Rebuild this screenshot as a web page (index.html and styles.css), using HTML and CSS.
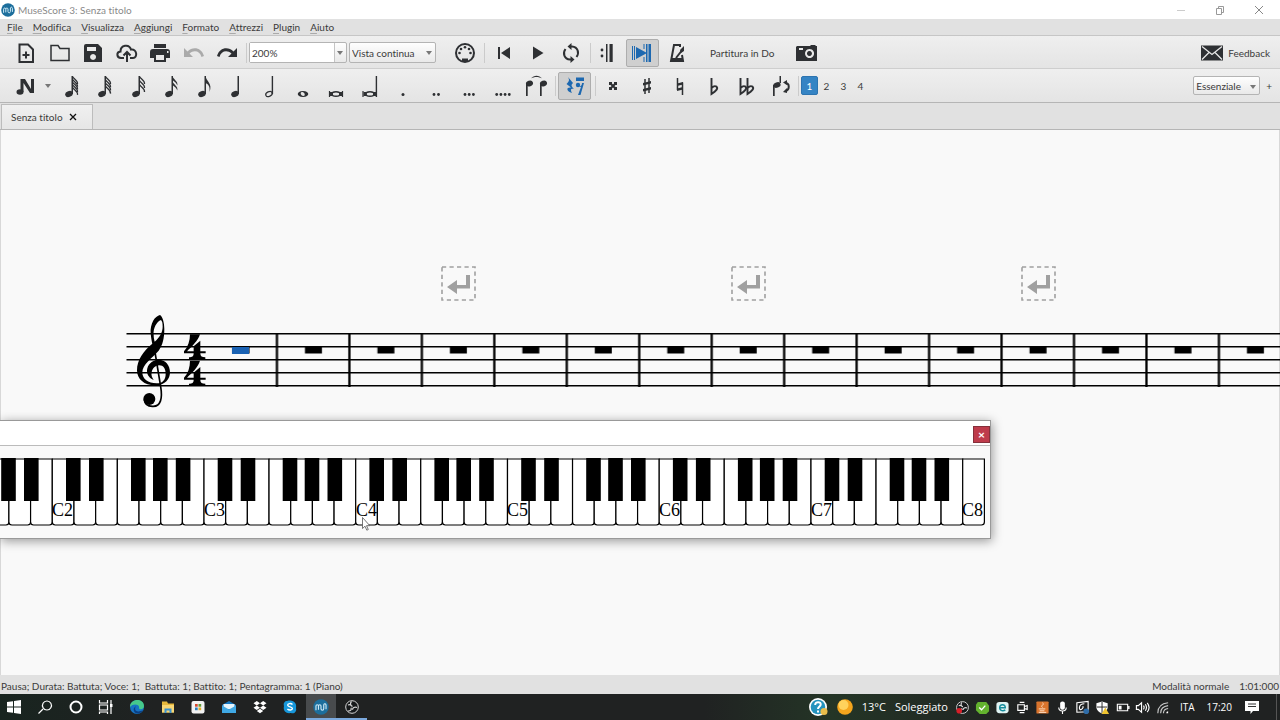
FILE: index.html
```html
<!DOCTYPE html>
<html lang="it">
<head>
<meta charset="utf-8">
<title>MuseScore 3: Senza titolo</title>
<link rel="stylesheet" href="styles.css">
</head>
<body>
<svg class="defs" aria-hidden="true">
  <defs>
    <symbol id="mu" viewBox="0 0 14 14"><circle cx="7" cy="7" r="6.8" fill="#1c6e9c"/><path d="M2.6 9.8V6.2c0-1.6 2.2-1.6 2.2 0v3.2M4.8 6.2c0-1.6 2.2-1.6 2.2 0v2.4c0 1.6 2.4 1.6 2.4 0V5M9.4 5c.6-1.4 1.8-1 2 .3v3.6" fill="none" stroke="#cfeaf6" stroke-width="1"/></symbol>
    <symbol id="flat" viewBox="0 0 24 24"><path d="M9.500 4v16C14 17 16.500 14.500 14.500 12.600 13 11.600 11 12.500 9.500 14" fill="none" stroke="#2e3033" stroke-width="1.900"/></symbol>
    <symbol id="note" viewBox="0 0 24 24"><ellipse cx="11" cy="20" rx="3.900" ry="3" transform="rotate(-18 11 20)"/><path d="M13.500 2h1.500v18h-1.500z"/></symbol>
    <symbol id="flag" viewBox="0 0 24 24"><path d="M14.500 2c.5 3.500 6 5 4.800 9.500-.8-2.800-3-3.700-4.800-5.500z"/></symbol>
    <symbol id="hairflag" viewBox="0 0 24 24"><path d="M14.500 2.500c1 2.500 5.500 3.500 5 7.500" fill="none" stroke="#2e3033" stroke-width="1.300"/></symbol>
    <symbol id="obs" viewBox="0 0 16 16"><circle cx="8" cy="8" r="6.300" fill="#16191a" stroke="#d7d7d7"/><path d="M7.500 2.500c-2 2-.7 4.300 1 4.800M13 8.500c-2.600-1-4.400.3-4.500 2.200M4 12c2.600.2 3.800-1.500 3-3.300M4 6c1.500-.5 3 0 3.500 1" fill="none" stroke="#d7d7d7" stroke-width="1.200"/></symbol>
  </defs>
</svg>

<header class="titlebar">
  <svg class="app-logo" viewBox="0 0 14 14"><use href="#mu"/></svg>
  <span class="title">MuseScore 3: Senza titolo</span>
  <div class="window-controls">
    <button aria-label="Riduci"><svg viewBox="0 0 12 12"><path d="M2 6.500h8" stroke="#ccc"/></svg></button>
    <button aria-label="Ripristina"><svg viewBox="0 0 12 12"><path d="M2.500 4.500h5v6h-5zM4.500 4.500v-2h5v6h-2" stroke="#999"/></svg></button>
    <button aria-label="Chiudi"><svg viewBox="0 0 12 12"><path d="M2 2l8 8M10 2l-8 8" stroke="#888"/></svg></button>
  </div>
</header>

<nav class="menubar">
  <button><u>F</u>ile</button><button><u>M</u>odifica</button><button><u>V</u>isualizza</button><button><u>A</u>ggiungi</button><button><u>F</u>ormato</button><button><u>A</u>ttrezzi</button><button><u>P</u>lugin</button><button><u>A</u>iuto</button>
</nav>

<div class="toolbar main-bar">
  <i class="grip"></i>
  <div class="group file-tools">
    <button aria-label="Nuovo"><svg viewBox="0 0 24 24"><path d="M5.500 3.500h8.500l5 5v12.500H5.500zM8.500 14h7M12 10.500v7" class="line2"/></svg></button>
    <button aria-label="Apri"><svg viewBox="0 0 24 24"><path d="M3 19.500v-15h7l2 3h9v12z" class="line"/></svg></button>
    <button aria-label="Salva"><svg viewBox="0 0 24 24"><path fill-rule="evenodd" d="M5 3h12l4 4v14H3V5q0-2 2-2zm1 3v4h9V6zm6 7a3 3 0 1 0 .1 0z"/></svg></button>
    <button aria-label="Salva online"><svg viewBox="0 0 24 24"><path d="M9 17H6C1.500 17 1 11 5.500 10.500 5.500 4 14 2.500 16 8.500 22 7.500 23 17 18 17h-3M12 21v-9M8.500 14.500L12 11l3.500 3.500" class="line2"/></svg></button>
    <button aria-label="Stampa"><svg viewBox="0 0 24 24"><path fill-rule="evenodd" d="M6 3h12v4H6zM5 8h14q3 0 3 3v6h-4v4H6v-4H2v-6q0-3 3-3zm3 6v5h8v-5zm11-4v2h1.500v-2z"/></svg></button>
    <button class="dim" aria-label="Annulla"><svg viewBox="0 0 24 24"><path d="M2 7v9h9l-3.500-3.500C12 8.500 18 10 19.500 16l2.500-1C19.500 6.500 11 5 5.500 10.500z"/></svg></button>
    <button aria-label="Ripeti"><svg viewBox="0 0 24 24"><path d="M22 7v9h-9l3.500-3.500C12 8.500 6 10 4.500 16L2 15C4.500 6.500 13 5 18.500 10.500z"/></svg></button>
  </div>
  <i class="sep"></i>
  <div class="combo zoom"><input aria-label="Zoom" value="200%"><button aria-label="Apri elenco zoom"></button></div>
  <div class="combo view"><select aria-label="Vista"><option>Vista continua</option></select></div>
  <button class="tool midi" aria-label="MIDI"><svg viewBox="0 0 24 24"><circle cx="12" cy="12" r="9" class="line2"/><g><circle cx="6.500" cy="12" r="1.300"/><circle cx="8" cy="8" r="1.300"/><circle cx="12" cy="6.300" r="1.300"/><circle cx="16" cy="8" r="1.300"/><circle cx="17.500" cy="12" r="1.300"/><path d="M9 17.500h6v3H9z"/></g></svg></button>
  <i class="sep"></i>
  <div class="group play-tools">
    <button aria-label="Inizio"><svg viewBox="0 0 24 24"><path d="M6 6h2v12H6zM18 6v12l-9-6z"/></svg></button>
    <button aria-label="Riproduci"><svg viewBox="0 0 24 24"><path d="M7 5.500v13L17.500 12z"/></svg></button>
    <button aria-label="Ciclo"><svg viewBox="0 0 24 24"><path d="M11 5.500h2C19 6 20.500 12 17.500 16M13 18.500h-2C5 18 3.500 12 6.500 8" class="line2"/><path d="M12.500 2v7L8.500 5.500zM11.500 15v7l4-3.500z"/></svg></button>
  </div>
  <i class="sep"></i>
  <div class="group mode-tools">
    <button aria-label="Ritornelli"><svg viewBox="0 0 24 24"><circle cx="7" cy="9" r="1.400"/><circle cx="7" cy="15" r="1.400"/><path d="M11 3h1.500v18H11zM14.500 3h3.200v18h-3.200z"/></svg></button>
    <button class="active" aria-label="Segui la riproduzione"><svg viewBox="0 0 24 24"><path d="M2 5h1v14H2zM4 5h1v14H4zM6 6l11 6-11 6zM13.500 3h1v5h-1zM13.500 16h1v5h-1zM16 3h1.500v18H16zM18.500 3h2.500v18h-2.500z"/></svg></button>
    <button aria-label="Metronomo"><svg viewBox="0 0 24 24"><path d="M11 17l7-9M15 6V4H9L6 20h12l-1-6M7 18h11" class="line2"/><path d="M15 9l4-4v5l-3 2z"/></svg></button>
  </div>
  <i class="grip"></i>
  <button class="text-tool">Partitura in Do</button>
  <i class="grip"></i>
  <button class="tool camera" aria-label="Cattura immagine"><svg viewBox="0 0 24 24"><path fill-rule="evenodd" d="M2 5h13l1-1h4l1 1h1v15H1V6zm12.500 3a4.500 4.500 0 1 0 .1 0zm0 2a2.500 2.500 0 1 1-.1 0zM4 7v2h4V7z"/></svg></button>
  <button class="feedback"><svg viewBox="0 0 24 24"><path d="M1 4.500h22v15H1z"/><path d="M2 5.500l10 8 10-8M2 18.500l7-7M22 18.500l-7-7" fill="none" stroke="#e8e8e8" stroke-width="1.300"/></svg>Feedback</button>
</div>

<div class="toolbar notes-bar">
  <i class="grip"></i>
  <button class="tool entry" aria-label="Inserimento note"><svg viewBox="0 0 24 24"><ellipse cx="6" cy="18" rx="3.500" ry="2.700"/><path d="M6.500 5H11l6 10V5h3v14h-4L9.500 9v9h-3z"/></svg></button>
  <button class="drop" aria-label="Modalità di inserimento"></button>
  <div class="group durations">
    <button aria-label="1/128"><svg viewBox="0 0 24 24"><use href="#note"/><use href="#hairflag"/><use href="#hairflag" y="2.700"/><use href="#hairflag" y="5.400"/><use href="#hairflag" y="8.100"/><use href="#hairflag" y="10.800"/></svg></button>
    <button aria-label="1/64"><svg viewBox="0 0 24 24"><use href="#note"/><use href="#hairflag"/><use href="#hairflag" y="3.200"/><use href="#hairflag" y="6.400"/><use href="#hairflag" y="9.600"/></svg></button>
    <button aria-label="1/32"><svg viewBox="0 0 24 24"><use href="#note"/><use href="#hairflag"/><use href="#hairflag" y="4"/><use href="#hairflag" y="8"/></svg></button>
    <button aria-label="1/16"><svg viewBox="0 0 24 24"><use href="#note"/><use href="#flag"/><use href="#flag" y="5"/></svg></button>
    <button aria-label="1/8"><svg viewBox="0 0 24 24"><use href="#note"/><path d="M14.500 2c.5 5 7.500 7.500 4 16 .8-6-1.500-8-4-9z"/></svg></button>
    <button aria-label="1/4"><svg viewBox="0 0 24 24"><use href="#note"/></svg></button>
    <button aria-label="1/2"><svg viewBox="0 0 24 24"><ellipse cx="11" cy="20" rx="3.400" ry="2.300" transform="rotate(-25 11 20)" class="thin"/><path d="M13.700 2h1.400v18h-1.400z"/></svg></button>
    <button aria-label="Intero"><svg viewBox="0 0 24 24"><path fill-rule="evenodd" d="M12 17c7 0 7 6 0 6s-7-6 0-6zm-1 1c-2.500.5-1 4 1.500 4s1-4.500-1.500-4z"/></svg></button>
    <button aria-label="Breve"><svg viewBox="0 0 24 24"><path d="M5.500 17v6M18.500 17v6" class="thin"/><path d="M6 18h3v4H6zM15 18h3v4h-3z"/><ellipse cx="12" cy="20" rx="4" ry="2.300" class="line"/></svg></button>
    <button aria-label="Longa"><svg viewBox="0 0 24 24"><path d="M5 17v6" class="thin"/><path d="M5.500 18h3v4h-3zM15 18h3v4h-3zM17.700 2h1.400v21h-1.400z"/><ellipse cx="12" cy="20" rx="4" ry="2.300" class="line"/></svg></button>
    <button aria-label="Punto"><svg viewBox="0 0 24 24"><circle cx="12" cy="20.500" r="1.500"/></svg></button>
    <button aria-label="Doppio punto"><svg viewBox="0 0 24 24"><circle cx="10" cy="20.500" r="1.400"/><circle cx="14.500" cy="20.500" r="1.400"/></svg></button>
    <button aria-label="Triplo punto"><svg viewBox="0 0 24 24"><circle cx="8" cy="20.500" r="1.400"/><circle cx="12.200" cy="20.500" r="1.400"/><circle cx="16.400" cy="20.500" r="1.400"/></svg></button>
    <button aria-label="Quadruplo punto"><svg viewBox="0 0 24 24"><circle cx="5.700" cy="20.500" r="1.400"/><circle cx="9.900" cy="20.500" r="1.400"/><circle cx="14.100" cy="20.500" r="1.400"/><circle cx="18.300" cy="20.500" r="1.400"/></svg></button>
    <button aria-label="Legatura"><svg viewBox="0 0 24 24"><ellipse cx="5.500" cy="9.500" rx="3.600" ry="2.800" transform="rotate(-20 5.500 9.500)"/><ellipse cx="19.500" cy="9.500" rx="3.600" ry="2.800" transform="rotate(-20 19.500 9.500)"/><path d="M2 10h1.700v12H2zM16 10h1.700v12H16zM7 4.500c3-3.700 8-3.700 11 0-3-2-8-2-11 0z"/></svg></button>
  </div>
  <i class="sep"></i>
  <button class="tool active rest" aria-label="Pausa"><svg viewBox="0 0 24 24"><path d="M5 3l5 6c-2 2-2 3 1 6-3-1-4 0-2 4-6-2-6-6-1-5.500L3.500 10c3-3 3-4 1.500-7zM13 3.500h8v3.500h-8z"/><circle cx="15" cy="11" r="2.200"/><path d="M15 12c3 1 4-1 4-3h2L17.500 21H15l3-8z"/></svg></button>
  <i class="sep"></i>
  <div class="group accidentals">
    <button aria-label="Doppio diesis"><svg viewBox="0 0 24 24"><path d="M9 9l6 6M15 9l-6 6" class="line2"/><path d="M8 8h3v3H8zM13 8h3v3h-3zM8 13h3v3H8zM13 13h3v3h-3z"/></svg></button>
    <button aria-label="Diesis"><svg viewBox="0 0 24 24"><path d="M10 5v15M14 4v15" class="line"/><path d="M8 9l8-2v2.500l-8 2zM8 15l8-2v2.500l-8 2z"/></svg></button>
    <button aria-label="Bequadro"><svg viewBox="0 0 24 24"><path d="M9.500 4v12M14.500 8.500V21" class="line"/><path d="M9 9.500l6-1.500v2.500L9 12zM9 14.500l6-1.500v2.500L9 17z"/></svg></button>
    <button aria-label="Bemolle"><svg viewBox="0 0 24 24"><use href="#flat"/></svg></button>
    <button aria-label="Doppio bemolle"><svg viewBox="0 0 24 24"><use href="#flat" x="-4"/><use href="#flat" x="3"/></svg></button>
    <button aria-label="Inverti direzione"><svg viewBox="0 0 24 24"><ellipse cx="8" cy="11" rx="3.700" ry="2.700" transform="rotate(-20 8 11)"/><path d="M4 11h1.700v11H4zM10.500 2H12v7h-1.500z"/><path d="M16 9c5 0 5 7 0 8" class="line2"/><path d="M14 18l4-4v5zM18 6v5l-4-2.500z"/></svg></button>
  </div>
  <i class="sep"></i>
  <div class="voices"><button class="on">1</button><button>2</button><button>3</button><button>4</button></div>
  <i class="grip"></i>
  <div class="workspace"><div class="combo"><select aria-label="Spazio di lavoro"><option>Essenziale</option></select></div><button class="plus" aria-label="Aggiungi spazio di lavoro">+</button></div>
</div>

<div class="tabs"><div class="tab">Senza titolo<button aria-label="Chiudi scheda"><svg viewBox="0 0 8 8"><path d="M1 1l6 6M7 1L1 7" stroke="#111" stroke-width="1.300"/></svg></button></div></div>

<main class="score">
  <svg class="sheet" role="img" aria-label="Pentagramma in 4/4">
    <defs>
      <pattern id="measures" patternUnits="userSpaceOnUse" x="206" y="0" width="72.460" height="400"><path d="M69.800 203h2.300v54h-2.300z"/><path d="M26.500 216.500h17v7h-17z"/></pattern>
      <g id="four"><path d="M240 238H270C264 258 246 274 231 289H251V274L271 257V289H287V295H271C271 304 276 307 286 307V313H237V307C247 307 251 304 251 295H222V289C234 276 240 258 240 238Z"/></g>
      <g id="break"><rect x="1" y="1" width="33" height="33" fill="none" stroke="#a0a0a0" stroke-width="1.600" stroke-dasharray="4.200 3.300"/><path d="M6 21l10-7v5h9V9h4v13.500H16V28z" fill="#a0a0a0"/></g>
    </defs>
    <g stroke="#000" stroke-width="1.500"><line x1="126.500" y1="203.700" x2="100%" y2="203.700"/><line x1="126.500" y1="216.700" x2="100%" y2="216.700"/><line x1="126.500" y1="229.700" x2="100%" y2="229.700"/><line x1="126.500" y1="242.700" x2="100%" y2="242.700"/><line x1="126.500" y1="255.700" x2="100%" y2="255.700"/></g>
    <rect x="207" y="200" width="100%" height="60" fill="url(#measures)"/>
    <rect x="232" y="217" width="17" height="7" fill="#1a62b3"/>
    <g transform="translate(110 125) scale(.3333)">
      <path fill-rule="evenodd" d="M127 266C100 288 81 315 81 346C81 374 105 393 140 391C165 390 180 373 180 352C180 330 166 314 146 314C126 314 111 330 111 348C111 360 119 370 131 375C126 368 123 360 125 352C127 340 136 331 148 331C160 331 167 341 167 356C167 374 158 385 140 385C114 385 97 372 97 352C97 328 126 310 146 287C158 271 163 250 163 222C163 203 158 185 150 180C135 183 120 205 122 235C123 247 125 258 127 266ZM153 195C140 200 129 220 131 240C131 250 133 256 134 260C148 248 158 232 158 215C158 205 157 199 153 195Z"/>
      <path d="M129 255L152 395C158 430 152 454 130 454C112 455 104 445 103 433" fill="none" stroke="#000" stroke-width="5"/><circle cx="118" cy="432" r="18"/>
      <use href="#four"/><use href="#four" y="79"/>
    </g>
    <use href="#break" x="441" y="136"/><use href="#break" x="731" y="136"/><use href="#break" x="1021" y="136"/>
  </svg>

  <section class="piano" aria-label="Tastiera di pianoforte">
    <div class="piano-title"><button aria-label="Chiudi tastiera">×</button></div>
    <svg class="keys" viewBox="0 0 990 92">
      <defs>
        <path id="key" d="M0 13V76Q0 79 3 79H18.700Q21.700 79 21.700 76V13Z" fill="#fff" stroke="#000" stroke-width="1.200"/>
        <g id="octave"><use href="#key"/><use href="#key" x="21.680"/><use href="#key" x="43.360"/><use href="#key" x="65.040"/><use href="#key" x="86.720"/><use href="#key" x="108.400"/><use href="#key" x="130.080"/><path d="M13.700 12h14.600v43H13.700zM36.700 12h14.600v43H36.700zM78.700 12h14.600v43H78.700zM100.700 12h14.600v43H100.700zM123.500 12h14.600v43H123.500z"/></g>
      </defs>
      <use href="#octave" x="-99.500"/><use href="#octave" x="52.300"/><use href="#octave" x="204"/><use href="#octave" x="355.700"/><use href="#octave" x="507.500"/><use href="#octave" x="659.200"/><use href="#octave" x="811"/><use href="#key" x="962.700"/>
      <g class="key-label"><text x="52" y="70">C2</text><text x="204" y="70">C3</text><text x="356" y="70">C4</text><text x="507" y="70">C5</text><text x="659" y="70">C6</text><text x="811" y="70">C7</text><text x="962" y="70">C8</text></g>
      <path d="M362.500 71.500v11l2.500-2.300 1.800 4 1.500-.7-1.800-3.800h3.300z" fill="#fff" stroke="#555" stroke-width=".8"/>
    </svg>
  </section>
</main>

<div class="status"><span>Pausa; Durata: Battuta; Voce: 1;&nbsp; Battuta: 1; Battito: 1; Pentagramma: 1 (Piano)</span><span class="mode">Modalità normale</span><span>1:01:000</span></div>

<footer class="taskbar">
  <div class="apps">
    <button aria-label="Start"><svg viewBox="0 0 16 16"><path d="M1 3l6-.8v5.300H1zM8 2l7-1v6.500H8zM1 8.500h6v5.300L1 13zM8 8.500h7V15l-7-1z" fill="#fff"/></svg></button>
    <button aria-label="Cerca"><svg viewBox="0 0 16 16"><path d="M6 10L1.500 14.500M10 2a4.500 4.500 0 1 1-.1 0z" class="white"/></svg></button>
    <button aria-label="Cortana"><svg viewBox="0 0 16 16"><circle cx="8" cy="8" r="5.500" fill="none" stroke="#fff" stroke-width="2"/></svg></button>
    <button aria-label="Visualizzazione attività"><svg viewBox="0 0 16 16"><path d="M1.500 1v3h8V1M1.500 6h8v5h-8zM1.500 15v-2h8v2M13 1v14" class="white"/><path d="M12 5h2.500v3H12z" fill="#fff"/></svg></button>
    <button aria-label="Edge"><svg viewBox="0 0 16 16"><circle cx="8" cy="8" r="7" fill="#1674c4"/><path d="M1 8C1-1 15-1 15 7c0 4-5 4-5 2 1-4-6-5-9-1z" fill="#46c98b"/><path d="M7 7c-3 5 2 7 7 4-3 6-11 4-9-2z" fill="#0c3f83"/></svg></button>
    <button aria-label="Esplora file"><svg viewBox="0 0 16 16"><path d="M2 2.500h5l1 2h6v9H2z" fill="#e6b83c"/><path d="M2 6h12v7.500H2z" fill="#f8d775"/><path d="M4.500 14V9.500h7V14h-2v-2.500h-3V14z" fill="#3c92cf"/></svg></button>
    <button aria-label="Store"><svg viewBox="0 0 16 16"><rect x="1.500" y="2" width="13" height="12.500" rx="2" fill="#f2f2f2"/><path d="M5 5h2.700v2.700H5z" fill="#d6492f"/><path d="M8.500 5h2.700v2.700H8.500z" fill="#5f9d34"/><path d="M5 8.500h2.700v2.700H5z" fill="#2a7fc0"/><path d="M8.500 8.500h2.700v2.700H8.500z" fill="#e3ad26"/></svg></button>
    <button aria-label="Posta"><svg viewBox="0 0 16 16"><path d="M1 6l7-4 7 4v8H1z" fill="#1477c2"/><path d="M2.500 5h11v5h-11z" fill="#e6f4fc"/><path d="M1 6.500l7 4 7-4V14H1z" fill="#3fa8e4"/></svg></button>
    <button aria-label="Dropbox"><svg viewBox="0 0 16 16"><path d="M4.800 2L8 4.300 4.800 6.500 1.500 4.300zM11.200 2l3.300 2.300-3.300 2.200L8 4.300zM4.800 6.500L8 8.800 4.800 11 1.500 8.800zM11.200 6.500l3.300 2.300-3.300 2.200L8 8.800zM8 9.800l3.200 2.200L8 14.200 4.800 12z" fill="#fff"/></svg></button>
    <button aria-label="Skype"><svg viewBox="0 0 16 16"><path d="M5 2c7-2 10 3 9 7 1 4-2 6-5 5-6 1-8-3-7-7-1-3 1-5 3-5z" fill="#1797da"/><path d="M10.500 5.500C9 4 5.500 4.300 5.700 6.300c.2 2 4.700 1.100 4.700 3.200 0 1.900-3.500 2-5 .5" fill="none" stroke="#fff" stroke-width="1.400"/></svg></button>
    <button class="current" aria-label="MuseScore"><svg viewBox="0 0 14 14"><use href="#mu"/></svg></button>
    <button class="open" aria-label="OBS Studio"><svg viewBox="0 0 16 16"><use href="#obs"/></svg></button>
  </div>
  <div class="weather">
    <svg class="help" viewBox="0 0 20 20"><circle cx="10" cy="10" r="9" fill="#fff"/><circle cx="10" cy="10" r="7.300" fill="#2493be"/><path d="M7.200 8c0-4 6-3.500 5.500-.3C12.500 9.500 10 9.500 10 12M10 13.500v2" fill="none" stroke="#fff" stroke-width="2"/><circle cx="16" cy="14.500" r="3.500" fill="#e9bd4b"/></svg>
    <svg class="sun" viewBox="0 0 16 16"><circle cx="8" cy="8" r="7.800" fill="#f5a51d"/><circle cx="6.500" cy="6" r="5" fill="#ffd25c"/></svg>
    <span class="temp">13°C</span><span>Soleggiato</span>
  </div>
  <div class="tray">
    <button aria-label="OBS"><svg viewBox="0 0 16 16"><use href="#obs"/><circle cx="4.500" cy="11.500" r="3" fill="#d81e28"/></svg></button>
    <button aria-label="Protezione"><svg viewBox="0 0 16 16"><path d="M3 2h9l3 4v6l-3 3H5l-4-4V5z" fill="#63b32e"/><path d="M4.500 8l2.500 2.500 4-4.500" fill="none" stroke="#fff" stroke-width="1.500"/></svg></button>
    <button aria-label="ESET"><svg viewBox="0 0 16 16"><rect x="1.500" y="2" width="13" height="12" rx="3" fill="#dff3f2"/><path d="M5 8.300h6C11 4 5 4 5 8c0 4 4 4 6 2.500" fill="none" stroke="#168d9c" stroke-width="1.500"/></svg></button>
    <button aria-label="Fotocamera"><svg viewBox="0 0 16 16"><path d="M3 5h7v6H3zM10 7l3-1v4l-3-1M5 2.500h5M5 13.500h5" class="white"/></svg></button>
    <button aria-label="Java"><svg viewBox="0 0 16 16"><rect x="1.500" y="1.500" width="13" height="13" rx="1" fill="#d9742d"/><path d="M8 3c3 2-3 3 0 5M4 9.500h7M5 11.500h5M4 13.200h8" stroke="#ffe4cc" fill="none"/></svg></button>
    <button aria-label="Microfono"><svg viewBox="0 0 16 16"><rect x="5.500" y="1.500" width="5" height="9" rx="2.300" fill="#fff"/><path d="M4 8c0 5 8 5 8 0M8 12v3" class="white"/></svg></button>
    <button aria-label="Penna"><svg viewBox="0 0 16 16"><path d="M2 3l12-1.500v11L2 13z" class="white"/><path d="M10 4C3 4 4 12 7 10c2-2 2-3 1-3" class="white"/><circle cx="12" cy="12" r="3" fill="#2e6ca8"/></svg></button>
    <button aria-label="Sicurezza"><svg viewBox="0 0 16 16"><path d="M7.500 1.500l6 2v5q-1 4-6 6-5-2-6-6v-5z" fill="#fff"/><path d="M7.500 2v12M2 7.500h11" stroke="#222"/><path d="M11 8l4 7H7z" fill="#efc431"/></svg></button>
    <button aria-label="Batteria"><svg viewBox="0 0 16 16"><path d="M2.500 4.500h11v7h-11z" class="white"/><path d="M4 6h3v4H4zM14 6.500h1.500v3H14z" fill="#fff"/></svg></button>
    <button aria-label="Volume"><svg viewBox="0 0 16 16"><path d="M1.500 6h2L7 3v10l-3.500-3h-2zM9 6q1.500 2 0 4M11 4.500q2.500 3.500 0 7M13 3q4 5 0 10" class="white"/></svg></button>
    <button aria-label="Rete"><svg viewBox="0 0 16 16"><path d="M3 14Q3 4 14 3M6 14q0-7 8-8M9 14q0-4.500 5-5" class="white" opacity=".75"/><path d="M12 14a2 2 0 0 1 2-2v2z" fill="#fff"/></svg></button>
  </div>
  <span class="lang">ITA</span><time>17:20</time>
  <button class="notify" aria-label="Notifiche"><svg viewBox="0 0 16 16"><path d="M1 2h14v10H9l-2.500 3v-3H1z" fill="#fff"/><path d="M4 5h8M4 7.500h8" stroke="#333"/></svg></button>
</footer>
</body>
</html>
```
FILE: styles.css
```css
* { box-sizing: border-box; }
body { margin: 0; min-height: 100vh; display: flex; flex-direction: column; background: #e1e1e1; color: #3b3b3b; font: 10px/14px Lato, "Open Sans", sans-serif; font-variant-ligatures: none; }
button, input, select { font: inherit; font-variant-ligatures: none; color: inherit; margin: 0; padding: 0; border: 0; background: none; }
svg { display: block; flex: none; }
.defs { position: absolute; width: 0; height: 0; }
.line, .line2, .thin { fill: none; stroke: #2e3033; stroke-width: 1.5; }
.line2 { stroke-width: 2; }
.thin { stroke-width: 1.2; }
.white { fill: none; stroke: #fff; stroke-width: 1.2; }

.titlebar { height: 19px; display: flex; align-items: center; gap: 3px; background: #fff; color: #8a8a8a; padding-left: 1px; }
.app-logo { width: 14px; height: 14px; }
.window-controls { margin-left: auto; padding-right: 2px; display: flex; }
.window-controls button { width: 39px; display: flex; justify-content: center; }
.window-controls svg { width: 12px; height: 12px; fill: none; }

.menubar { height: 17px; display: flex; align-items: center; gap: 10px; padding-left: 7px; border-bottom: 1px solid #c6c6c6; }
.menubar u { text-decoration-color: #aaa; text-underline-offset: 2px; }

.toolbar { height: 34px; display: flex; align-items: center; background: linear-gradient(#efefef, #e4e4e4); border-bottom: 1px solid #cecece; fill: #2e3033; }
.main-bar { height: 33px; padding-top: 1px; }
.notes-bar { border-bottom-color: #b5b5b5; }
.toolbar svg { width: 24px; height: 24px; overflow: visible; }
.grip { flex: none; width: 3px; height: 12px; margin-left: 4px; background: radial-gradient(#bbb 40%, transparent 50%) 0 0 / 2px 2px; opacity: .6; }
.sep { flex: none; width: 1px; height: 20px; background: #cbcbcb; }
.group { display: flex; justify-content: space-between; flex: none; }
.group button, .tool { flex: none; width: 32px; height: 28px; display: flex; align-items: center; justify-content: center; }
.file-tools { width: 233px; margin: 0 3px; }
.dim { fill: #aaa; }
.toolbar .active { width: 33px; background: #cfcfcf; border: 1px solid #adadad; border-radius: 2px; fill: #1d68b0; }

.combo { position: relative; display: flex; height: 21px; border: 1px solid #b4b4b4; border-radius: 2px; background: linear-gradient(#fefefe, #e9e9e9); }
.combo select { appearance: none; width: 100%; padding-left: 2px; border-radius: 2px; }
.combo::after, .drop::after { content: ""; position: absolute; right: 3px; top: 8px; border: 3px solid transparent; border-top: 4px solid #777; border-bottom: 0; pointer-events: none; }
.zoom { width: 98px; margin: 0 2px 0 2px; }
.zoom input { width: 85px; padding-left: 2px; background: #fff; border-right: 1px solid #c4c4c4; }
.zoom button { flex: 1; }
.view { width: 87px; }
.midi { margin: 0 3px 0 13px; }
.play-tools { width: 99px; margin: 0 3px 0 3px; }
.mode-tools { width: 102px; margin-right: 2px; }
.text-tool { margin: 0 8px; }
.camera { margin-left: 2px; }
.feedback { margin-left: auto; padding-right: 10px; display: flex; align-items: center; gap: 4px; }

.entry { margin-left: 3px; }
.drop { position: relative; width: 12px; height: 20px; }
.durations { width: 498px; margin-right: 3px; }
.rest { margin: 0 4px 0 2px; }
.accidentals { width: 200px; margin: 0 1px; }
.voices { display: flex; margin-left: 2px; }
.voices button { width: 17px; height: 19px; }
.voices .on { background: #3584c4; color: #fff; border: 1px solid #2d74b0; border-radius: 2px; }
.workspace { margin-left: auto; display: flex; align-items: center; gap: 6px; padding-right: 8px; }
.workspace .combo { width: 67px; height: 19px; }

.tabs { height: 27px; display: flex; align-items: flex-end; padding-left: 1px; border-bottom: 1px solid #b5b5b5; }
.tab { height: 25px; display: flex; align-items: center; gap: 6px; padding: 0 15px 0 9px; border: 1px solid #bcbcbc; border-bottom: 0; background: linear-gradient(#f0f0f0, #e6e6e6); }
.tab svg { width: 8px; height: 8px; }

.score { position: relative; flex: 1; min-height: 420px; display: flex; background: #f9f9f9; box-shadow: inset 1px 0 #d8d8d8, inset -1px 0 #d8d8d8; overflow: hidden; }
.sheet { flex: 1; min-width: 0; }
.piano { position: absolute; left: 0; top: 290px; width: 991px; background: #f9f9f9; border: 1px solid #999; border-left: 0; box-shadow: 1px 2px 10px rgba(0, 0, 0, .4); }
.piano-title { height: 25px; display: flex; align-items: flex-end; justify-content: flex-end; padding-bottom: 2px; background: #fff; border-bottom: 1px solid #bbb; }
.piano-title button { width: 17px; height: 17px; background: #be3b4b; border: 1px solid #85303b; color: #fff; font-size: 12px; font-weight: 700; line-height: 14px; }
.keys { width: 990px; height: 92px; }
.key-label { font: 18px "Liberation Serif", serif; }

.status { height: 19px; display: flex; align-items: center; padding: 2px 1px 0; }
.mode { margin-left: auto; margin-right: 10px; }

.taskbar { height: 26px; display: flex; align-items: center; background: linear-gradient(90deg, #18241f, #202222 12%, #202222 55%, #243526 65%, #202222 80%); color: #fff; font-family: "Open Sans", sans-serif; font-size: 11px; }
.taskbar svg { width: 16px; height: 16px; }
.apps { width: 368px; height: 26px; display: flex; margin-left: -1px; }
.apps button { flex: 1; display: flex; align-items: center; justify-content: center; border-bottom: 2px solid transparent; border-top: 2px solid transparent; }
.apps .current { background: #484b4d; border-bottom-color: #7ba9dd; }
.apps .open { border-bottom-color: #7ba9dd; }
.weather { margin-left: auto; display: flex; align-items: center; gap: 9px; }
.weather .help { width: 20px; height: 20px; }
.tray { display: flex; margin-left: 5px; }
.tray button { width: 20px; display: flex; justify-content: center; }
.tray svg { width: 15px; height: 15px; }
.lang { margin: 0 12px 0 7px; font-size: 10px; }
.taskbar time { font-size: 10px; }
.notify { margin-left: 12px; margin-right: 3px; padding-right: 16px; border-right: 1px solid #555; height: 26px; }
```
